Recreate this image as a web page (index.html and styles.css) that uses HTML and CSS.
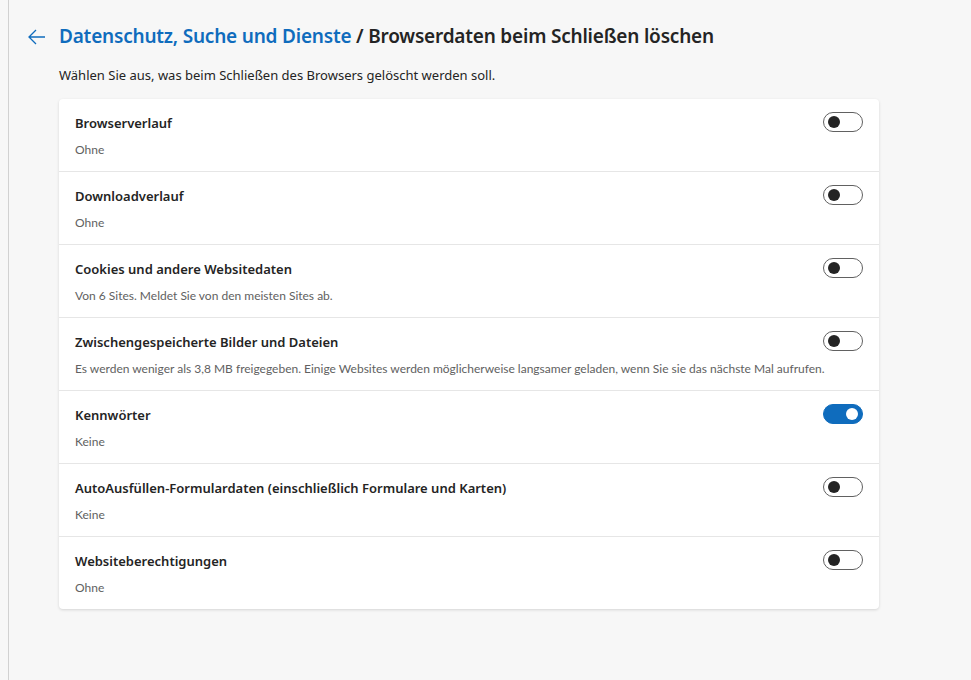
FILE: index.html
```html
<!DOCTYPE html>
<html lang="de">
<head>
<meta charset="UTF-8">
<title>Browserdaten beim Schließen löschen</title>
<link rel="stylesheet" href="styles.css">
</head>
<body>
<div class="sidebar-edge"></div>
<main class="page">
  <div class="header">
    <button class="back" aria-label="Zurück">
      <svg width="18" height="16" viewBox="0 0 18 16"><path d="M8 1 L1 8 L8 15 M1 8 H17" fill="none" stroke="#0f6cbd" stroke-width="1.3"/></svg>
    </button>
    <h1><a href="#">Datenschutz, Suche und Dienste</a> / Browserdaten beim Schließen löschen</h1>
  </div>
  <p class="intro">Wählen Sie aus, was beim Schließen des Browsers gelöscht werden soll.</p>

  <div class="card">
    <div class="row">
      <div class="text"><div class="title">Browserverlauf</div><div class="sub">Ohne</div></div>
      <span class="toggle"></span>
    </div>
    <div class="row">
      <div class="text"><div class="title">Downloadverlauf</div><div class="sub">Ohne</div></div>
      <span class="toggle"></span>
    </div>
    <div class="row">
      <div class="text"><div class="title">Cookies und andere Websitedaten</div><div class="sub">Von 6 Sites. Meldet Sie von den meisten Sites ab.</div></div>
      <span class="toggle"></span>
    </div>
    <div class="row">
      <div class="text"><div class="title">Zwischengespeicherte Bilder und Dateien</div><div class="sub">Es werden weniger als 3,8 MB freigegeben. Einige Websites werden möglicherweise langsamer geladen, wenn Sie sie das nächste Mal aufrufen.</div></div>
      <span class="toggle"></span>
    </div>
    <div class="row">
      <div class="text"><div class="title">Kennwörter</div><div class="sub">Keine</div></div>
      <span class="toggle on"></span>
    </div>
    <div class="row">
      <div class="text"><div class="title">AutoAusfüllen-Formulardaten (einschließlich Formulare und Karten)</div><div class="sub">Keine</div></div>
      <span class="toggle"></span>
    </div>
    <div class="row">
      <div class="text"><div class="title">Websiteberechtigungen</div><div class="sub">Ohne</div></div>
      <span class="toggle"></span>
    </div>
  </div>
</main>
</body>
</html>
```

FILE: styles.css
```css
html, body {
  height: 100%;
}
body {
  margin: 0;
  background: #f7f7f7;
  font-family: "Noto Sans", "Open Sans", Arial, sans-serif;
  color: #242424;
  display: flex;
}
.sidebar-edge {
  width: 8px;
  flex: none;
  border-right: 1px solid #d1d1d1;
}
.page {
  padding: 20px 0 0 19px;
}
.header {
  display: flex;
  align-items: center;
  height: 32px;
}
.back {
  background: none;
  border: none;
  padding: 0;
  margin: 2px 13px 0 0;
  width: 18px;
  height: 16px;
  cursor: pointer;
}
h1 {
  margin: 0;
  font-size: 19px;
  font-weight: 600;
  color: #242424;
  letter-spacing: -0.2px;
}
h1 a {
  color: #0f6cbd;
  text-decoration: none;
}
.intro {
  margin: 14px 0 15px 31px;
  font-size: 13px;
}
.card {
  width: 820px;
  margin-left: 31px;
  background: #fff;
  border-radius: 4px;
  box-shadow: 0 1px 3px rgba(0, 0, 0, 0.14);
}
.row {
  display: flex;
  align-items: flex-start;
  justify-content: space-between;
  height: 72px;
  padding: 0 16px;
  border-top: 1px solid #e6e6e6;
}
.row:first-child {
  border-top: none;
}
.text {
  flex: 1;
  min-width: 0;
}
.title {
  font-size: 13px;
  font-weight: 600;
  margin-top: 14px;
  line-height: 20px;
}
.sub {
  font-family: Lato, "Noto Sans", sans-serif;
  font-size: 12px;
  color: #616161;
  margin-top: 9px;
  line-height: 16px;
  white-space: nowrap;
}
.toggle {
  flex: none;
  position: relative;
  width: 38px;
  height: 18px;
  margin-top: 13px;
  border: 1px solid #616161;
  border-radius: 10px;
}
.toggle::after {
  content: '';
  position: absolute;
  top: 3px;
  left: 4px;
  width: 12px;
  height: 12px;
  border-radius: 50%;
  background: #242424;
}
.toggle.on {
  background: #0f6cbd;
  border-color: #0f6cbd;
}
.toggle.on::after {
  left: auto;
  right: 4px;
  background: #fff;
}
```
